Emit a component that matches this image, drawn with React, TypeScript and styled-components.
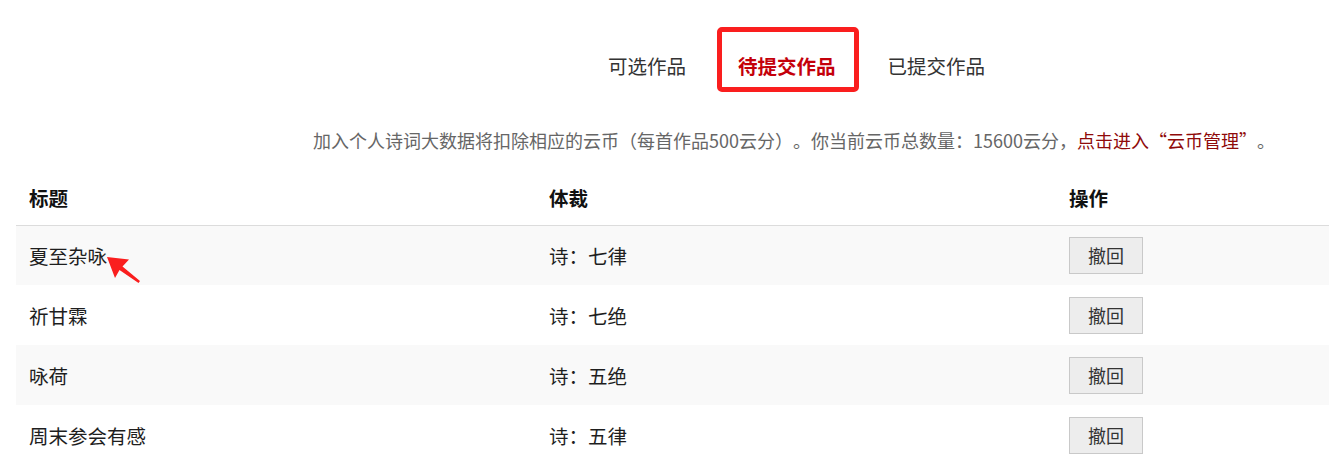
import React from "react";
import styled, { createGlobalStyle } from "styled-components";

const GlobalStyle = createGlobalStyle`
  html, body {
    margin: 0;
    padding: 0;
    background: #ffffff;
    font-family: "Noto Sans CJK SC", "Noto Sans", sans-serif;
    color: #222;
  }
`;

const Page = styled.div`
  position: relative;
  width: 1329px;
  height: 466px;
  overflow: hidden;
`;

const Tabs = styled.nav`
  display: flex;
  margin-top: 36px;
  padding-left: 582px;
  height: 60px;
`;

const Tab = styled.div<{ $active?: boolean }>`
  position: relative;
  padding: 0 26px;
  line-height: 60px;
  font-size: 19.5px;
  font-weight: ${(p) => (p.$active ? 700 : 400)};
  color: ${(p) => (p.$active ? "#c4000a" : "#333")};
  white-space: nowrap;
`;

const Highlight = styled.span`
  position: absolute;
  left: 5px;
  top: -9px;
  width: 142px;
  height: 65px;
  box-sizing: border-box;
  border: 5px solid #fa1e1e;
  border-radius: 5px;
`;

const Notice = styled.p`
  margin: 29px 0 0;
  padding-left: 313px;
  font-size: 18px;
  line-height: 30px;
  color: #666;
  white-space: nowrap;
  text-spacing-trim: space-all;
`;

const NoticeLink = styled.a`
  color: #8f0a0a;
  text-decoration: none;
`;

const Quote = styled.span`
  display: inline-block;
  width: 18px;
  text-align: ${(p: { $open?: boolean }) => (p.$open ? "right" : "left")};
`;

const Table = styled.table`
  margin: 15px 0 0 16px;
  width: 1313px;
  border-collapse: collapse;
  table-layout: fixed;
`;

const HeadCell = styled.th<{ $w?: number }>`
  width: ${(p) => (p.$w ? `${p.$w}px` : "auto")};
  height: 55px;
  padding: 0 0 0 13px;
  text-align: left;
  font-size: 19.5px;
  font-weight: 700;
  color: #111;
  border-bottom: 1px solid #dcdcdc;
  box-sizing: border-box;
`;

const Row = styled.tr<{ $striped?: boolean }>`
  background: ${(p) => (p.$striped ? "#f9f9f9" : "#ffffff")};
`;

const Cell = styled.td`
  height: 60px;
  padding: 0 0 0 13px;
  font-size: 19.5px;
  color: #1e1e1e;
  box-sizing: border-box;
  vertical-align: middle;
`;

const RevokeButton = styled.button`
  display: block;
  width: 74px;
  height: 37px;
  padding: 0;
  background: #ededed;
  border: 1px solid #c9c9c9;
  border-radius: 0;
  font-family: "Noto Sans CJK SC", "Noto Sans", sans-serif;
  font-size: 18px;
  color: #333;
  cursor: pointer;
`;

const Arrow = styled.svg`
  position: absolute;
  left: 100px;
  top: 250px;
  width: 45px;
  height: 36px;
`;

const rows = [
  { title: "夏至杂咏", genre: "诗：七律" },
  { title: "祈甘霖", genre: "诗：七绝" },
  { title: "咏荷", genre: "诗：五绝" },
  { title: "周末参会有感", genre: "诗：五律" },
];

export default function App() {
  return (
    <Page>
      <GlobalStyle />
      <Tabs>
        <Tab>可选作品</Tab>
        <Tab $active>
          待提交作品
          <Highlight />
        </Tab>
        <Tab>已提交作品</Tab>
      </Tabs>
      <Notice>
        加入个人诗词大数据将扣除相应的云币（每首作品500云分）。你当前云币总数量：15600云分，
        <NoticeLink href="#">
          点击进入<Quote $open>“</Quote>云币管理<Quote>”</Quote>
        </NoticeLink>
        。
      </Notice>
      <Table>
        <thead>
          <tr>
            <HeadCell $w={520}>标题</HeadCell>
            <HeadCell $w={520}>体裁</HeadCell>
            <HeadCell>操作</HeadCell>
          </tr>
        </thead>
        <tbody>
          {rows.map((r, i) => (
            <Row key={r.title} $striped={i % 2 === 0}>
              <Cell>{r.title}</Cell>
              <Cell>{r.genre}</Cell>
              <Cell>
                <RevokeButton>撤回</RevokeButton>
              </Cell>
            </Row>
          ))}
        </tbody>
      </Table>
      <Arrow viewBox="0 0 45 36">
        <polygon
          points="7,7 29,9.5 22.5,16.5 40,31 38.5,33 19.5,20 15,28"
          fill="#fa1e1e"
        />
      </Arrow>
    </Page>
  );
}
